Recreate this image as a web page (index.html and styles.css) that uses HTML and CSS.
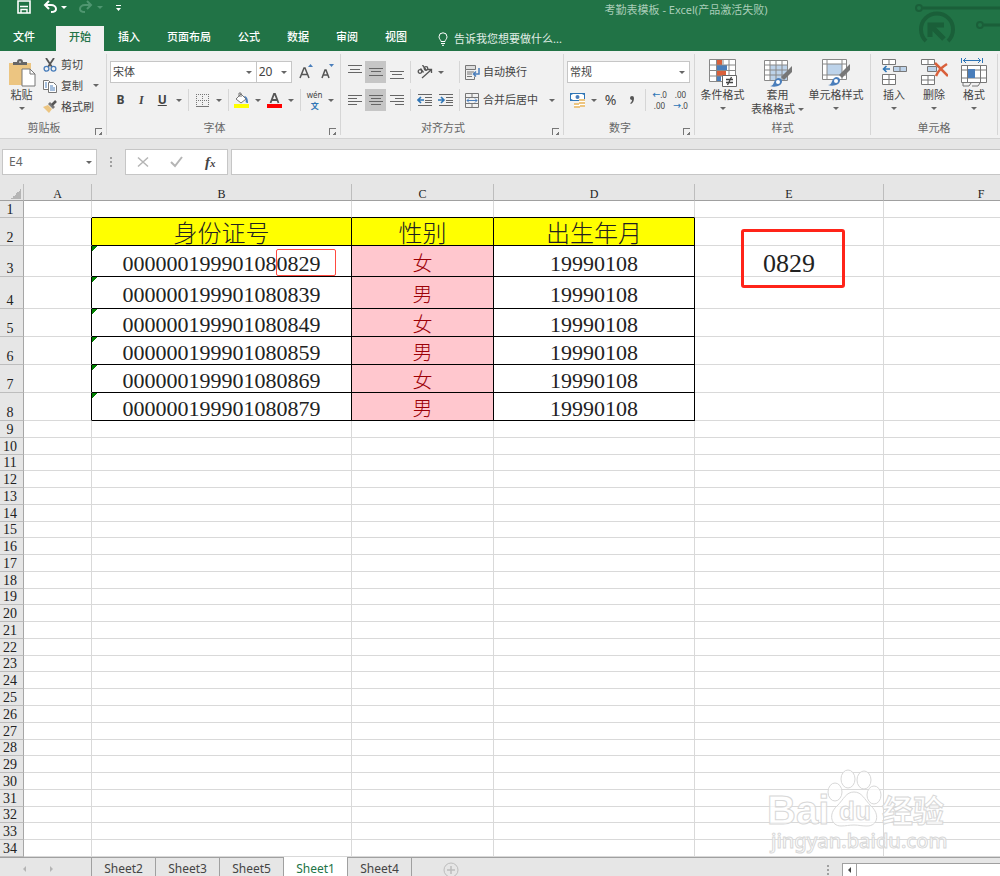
FILE: index.html
```html
<!DOCTYPE html>
<html lang="zh-CN">
<head>
  <meta charset="UTF-8">
  <title>考勤表模板 - Excel</title>
  <link rel="stylesheet" href="styles.css">
</head>
<body>

  <header class="titlebar">
    <svg class="decor" width="86" height="44" viewBox="0 0 86 44" fill="none" stroke="#1a5f39">
      <circle cx="5" cy="8" r="3" stroke-width="2"/>
      <path d="M9 8H86" stroke-width="3"/>
      <circle cx="66" cy="25" r="3" stroke-width="2"/>
      <path d="M70 25H86" stroke-width="3"/>
      <path d="M12 41A16 16 0 1 1 34 41" stroke-width="4"/>
      <path d="M16 37V25H30M17 26L30 39" stroke-width="5"/>
    </svg>

    <div class="title-row">
      <div class="quick">
        <button aria-label="保存"><svg width="14" height="14" viewBox="0 0 14 14"><path d="M1 1h12v12H1z" fill="none" stroke="#fff" stroke-width="1.6"/><path d="M3 6.500h8M4 13V9.500h6V13" fill="none" stroke="#fff" stroke-width="1.4"/></svg></button>
        <button aria-label="撤消"><svg width="14" height="14" viewBox="0 0 14 14" fill="none" stroke="#fff" stroke-width="2"><path d="M6 1L2 5l4 4M2 5h6c3 0 5 2 5 4s-2 3-5 3"/></svg><i class="caret"></i></button>
        <button aria-label="恢复" class="off"><svg width="14" height="14" viewBox="0 0 14 14" fill="none" stroke="#4f9670" stroke-width="2"><path d="M8 1l4 4-4 4M12 5H6C3 5 1 7 1 9s2 3 5 3"/></svg><i class="caret"></i></button>
        <button aria-label="自定义快速访问工具栏"><svg width="7" height="14" viewBox="0 0 7 14" fill="#fff"><path d="M1 5h5v1H1zM1 8h5L3.500 11z"/></svg></button>
      </div>
      <div class="title">考勤表模板 - Excel(产品激活失败)</div>
    </div>

    <nav class="tabs">
      <a href="#" class="file">文件</a>
      <a href="#" class="active">开始</a>
      <a href="#">插入</a>
      <a href="#">页面布局</a>
      <a href="#">公式</a>
      <a href="#">数据</a>
      <a href="#">审阅</a>
      <a href="#">视图</a>
      <button class="tell"><svg width="10" height="14" viewBox="0 0 10 14" fill="none" stroke="#fff"><path d="M3 9.500C3 8 1 7 1 4.800a4 4 0 0 1 8 0C9 7 7 8 7 9.500zM3 11.500h4M4 13.300h2"/></svg>告诉我您想要做什么...</button>
    </nav>
  </header>

  <section class="ribbon">
    <div class="group g-clip">
      <div class="body">
        <button class="big">
          <svg width="28" height="28" viewBox="0 0 28 28"><path d="M1 4h22v22H1z" fill="#ecc581"/><path d="M5 6V3h4a3 3 0 0 1 6 0h4v3z" fill="#666"/><path d="M11 3h2" stroke="#fff"/><path d="M14 10h8l5 5v12H14z" fill="#fff" stroke="#777"/><path d="M22 10v5h5" fill="none" stroke="#777"/></svg>
          <span>粘贴</span><i class="caret"></i>
        </button>
        <div class="stack">
          <button><svg width="14" height="14" viewBox="0 0 14 14" fill="none"><path d="M3 0l6 9M11 0L5 9" stroke="#555" stroke-width="1.800"/><circle cx="3.500" cy="10.800" r="2.400" stroke="#4a7ebb" stroke-width="1.300"/><circle cx="10.500" cy="10.800" r="2.400" stroke="#4a7ebb" stroke-width="1.300"/></svg>剪切</button>
          <button><svg width="14" height="14" viewBox="0 0 14 14" fill="#fff" stroke="#777"><path d="M.5 1.500h5l2 2v7h-7z"/><path d="M5.500 3.500h5l3 3v7h-8z"/><path d="M2 4h2M2 6h2M2 8h2M7 7h3M7 9h5M7 11h5" stroke="#4a7ebb"/></svg>复制<i class="caret"></i></button>
          <button><svg width="14" height="14" viewBox="0 0 14 14"><path d="M0 7l5-2 4 4-3 4z" fill="#ecc581"/><path d="M5 4l2-2 5 5-2 2z" fill="#777"/><path d="M9 5l4-4" stroke="#555" stroke-width="2.500"/></svg>格式刷</button>
        </div>
      </div>
      <footer>剪贴板<button class="launch" aria-label="剪贴板选项"></button></footer>
    </div>

    <div class="group g-font">
      <div class="body rows">
        <div class="row">
          <label class="combo font-name"><select aria-label="字体"><option>宋体</option></select></label>
          <label class="combo font-size"><select aria-label="字号"><option>20</option></select></label>
          <button class="tool grow" aria-label="增大字号"><svg width="14" height="16" viewBox="0 0 14 16"><path d="M1 14L5 4h1l4 10M2.500 10.500h6" fill="none" stroke="#555" stroke-width="1.500"/><path d="M9 3h5l-2.500-3z" fill="#4a7ebb"/></svg></button>
          <button class="tool" aria-label="减小字号"><svg width="14" height="16" viewBox="0 0 14 16"><path d="M2 14l3-8h1l3 8M3.500 11h4" fill="none" stroke="#555" stroke-width="1.500"/><path d="M9 0h5l-2.500 3z" fill="#4a7ebb"/></svg></button>
        </div>
        <div class="row">
          <button class="tool"><b>B</b></button>
          <button class="tool"><em>I</em></button>
          <button class="tool"><u>U</u></button>
          <button class="drop" aria-label="下划线类型"><i class="caret"></i></button>
          <span class="sep"></span>
          <button class="tool" aria-label="边框"><svg width="13" height="13" viewBox="0 0 13 13" stroke="#777" fill="none"><path d="M.5 0v12M6.500 0v12M12.500 0v12M0 .5h13M0 6.500h13" stroke-dasharray="1 1"/><path d="M0 12.500h13"/></svg></button>
          <button class="drop" aria-label="边框类型"><i class="caret"></i></button>
          <span class="sep"></span>
          <button class="tool" aria-label="填充颜色"><svg width="16" height="16" viewBox="0 0 16 16"><path d="M0 12h15v4H0z" fill="#ff0"/><path d="M2 7l5-5 5 5-5 4z" fill="#fff" stroke="#777"/><path d="M5 5V1h2v4" fill="none" stroke="#777"/><path d="M10 4c3 0 4 3 4 7-2 0-3-1-2-4z" fill="#4a7ebb"/></svg></button>
          <button class="drop" aria-label="填充颜色列表"><i class="caret"></i></button>
          <button class="tool" aria-label="字体颜色"><svg width="15" height="16" viewBox="0 0 15 16"><path d="M0 12h15v4H0z" fill="#f00"/><path d="M3.500 11L7 2h1l3.500 9M5 8h5" fill="none" stroke="#555" stroke-width="1.800"/></svg></button>
          <button class="drop" aria-label="字体颜色列表"><i class="caret"></i></button>
          <span class="sep"></span>
          <button class="tool wen"><span>wén</span><span class="blue">文</span></button>
          <button class="drop" aria-label="拼音选项"><i class="caret"></i></button>
        </div>
      </div>
      <footer>字体<button class="launch" aria-label="字体设置"></button></footer>
    </div>

    <div class="group g-align">
      <div class="body rows">
        <div class="row">
          <button class="tool" aria-label="顶端对齐"><svg width="14" height="14" viewBox="0 0 14 14" stroke="#666"><path d="M0 .5h14M2 4.500h10M0 7.500h14"/></svg></button>
          <button class="tool on" aria-label="垂直居中"><svg width="14" height="14" viewBox="0 0 14 14" stroke="#666"><path d="M0 3.500h14M2 6.500h10M0 10.500h14"/></svg></button>
          <button class="tool" aria-label="底端对齐"><svg width="14" height="14" viewBox="0 0 14 14" stroke="#666"><path d="M0 6.500h14M2 9.500h10M0 13.500h14"/></svg></button>
          <span class="sep"></span>
          <button class="tool" aria-label="方向"><svg width="16" height="14" viewBox="0 0 16 14" fill="none" stroke="#555"><g stroke-width="1.300"><circle cx="3" cy="6.500" r="1.800"/><path d="M3.500 3.500l3 4M5.500 0l4 5.500"/><circle cx="9" cy="3.500" r="1.800"/></g><path d="M5 13l9-8M11 4.500h3.500V8" stroke-width="1.300"/></svg></button>
          <button class="drop" aria-label="方向列表"><i class="caret"></i></button>
          <span class="sep push"></span>
          <button class="wide"><svg width="15" height="15" viewBox="0 0 15 15" fill="none" stroke="#777"><path d="M.5 4.500v-4h10v4z" fill="#ddd"/><path d="M.5 4.500v10h9v-3M2 7h7M2 9h5M2 11.500h5"/><path d="M14 3v6H9M11 6.500L8.500 9l2.500 2.500" stroke="#4a7ebb" stroke-width="1.500"/></svg>自动换行</button>
        </div>
        <div class="row">
          <button class="tool" aria-label="左对齐"><svg width="14" height="12" viewBox="0 0 14 12" stroke="#666"><path d="M0 1.500h14M0 4.500h9M0 7.500h14M0 10.500h9"/></svg></button>
          <button class="tool on" aria-label="居中"><svg width="14" height="12" viewBox="0 0 14 12" stroke="#666"><path d="M0 1.500h14M2 4.500h10M0 7.500h14M2 10.500h10"/></svg></button>
          <button class="tool" aria-label="右对齐"><svg width="14" height="12" viewBox="0 0 14 12" stroke="#666"><path d="M0 1.500h14M5 4.500h9M0 7.500h14M5 10.500h9"/></svg></button>
          <span class="sep"></span>
          <button class="tool" aria-label="减少缩进量"><svg width="16" height="12" viewBox="0 0 16 12" stroke="#666" fill="none"><path d="M1 .5h14M8 3.500h7M8 6.500h7M8 8.500h7M1 11.500h14"/><path d="M7 6H2M4 3L1 6l3 3" stroke="#2e75b6" stroke-width="1.600"/></svg></button>
          <button class="tool" aria-label="增加缩进量"><svg width="16" height="12" viewBox="0 0 16 12" stroke="#666" fill="none"><path d="M1 .5h14M8 3.500h7M8 6.500h7M8 8.500h7M1 11.500h14"/><path d="M0 6h6M3 3l3 3-3 3" stroke="#2e75b6" stroke-width="1.600"/></svg></button>
          <span class="sep push"></span>
          <button class="wide"><svg width="15" height="15" viewBox="0 0 15 15" fill="none" stroke="#777"><path d="M.5 .5h13v14H.5zM.5 4.500h13M.5 10.500h13M7 .5v4M7 10.500v4"/><path d="M2 7.500h10M4 5.500l-2 2 2 2M10 5.500l2 2-2 2" stroke="#4a7ebb"/></svg>合并后居中<i class="caret"></i></button>
        </div>
      </div>
      <footer>对齐方式<button class="launch" aria-label="对齐设置"></button></footer>
    </div>

    <div class="group g-num">
      <div class="body rows">
        <div class="row">
          <label class="combo num-format"><select aria-label="数字格式"><option>常规</option></select></label>
        </div>
        <div class="row">
          <button class="tool" aria-label="会计数字格式"><svg width="16" height="16" viewBox="0 0 16 16"><path d="M0 1h15v8H0z" fill="#2e75b6"/><path d="M3 2h9l2 1v4l-2 1H3L1 7V3z" fill="#fff"/><circle cx="7.500" cy="5" r="2" fill="#4a7ebb"/><path d="M9 7h6v8H9z" fill="#ecc581"/><path d="M4 11h6v5H4z" fill="#ecc581"/><path d="M9 9.500h6M9 12.500h6M4 13.500h6" stroke="#fff"/></svg></button>
          <button class="drop" aria-label="货币列表"><i class="caret"></i></button>
          <button class="tool pct">%</button>
          <button class="tool pct" aria-label="千位分隔样式"><svg width="6" height="9" viewBox="0 0 6 9"><path d="M1 2a2 2 0 0 1 4 0c0 3-1 5-3 6l-1-1c1 0 2-2 2-3-1 0-2-1-2-2z" fill="#555"/></svg></button>
          <span class="sep"></span>
          <button class="tool dec"><span><b class="blue">←</b>.0</span><span>.00</span></button>
          <button class="tool dec"><span>.00</span><span><b class="blue">→</b>.0</span></button>
        </div>
      </div>
      <footer>数字<button class="launch" aria-label="数字设置"></button></footer>
    </div>

    <div class="group g-style">
      <div class="body">
        <button class="big">
          <svg width="28" height="28" viewBox="0 0 28 28"><path d="M.5 .5h26v22H.5z" fill="#fff"/><path d="M8 1h5v5H8zM8 12h9v5H8z" fill="#d9603b"/><path d="M8 6h10v6H8zM8 17h4v6H8z" fill="#4a7ebb"/><path d="M.5 .5h26v22H.5zM.5 6h26M.5 11.500h26M.5 17h26M7.500 .5v22M14 .5v5M20 .5v22" fill="none" stroke="#888"/><path d="M13.500 16.500h14v11h-14z" fill="#fff" stroke="#666"/><path d="M17 20.500h7M17 23.500h7M22.500 18l-4 8" stroke="#444" stroke-width="1.300"/></svg>
          <span>条件格式</span><i class="caret"></i>
        </button>
        <button class="big">
          <svg width="28" height="28" viewBox="0 0 28 28"><path d="M.5 1.500h23v20H.5z" fill="#fff"/><path d="M6 6h17v15H6z" fill="#bdd3ea"/><path d="M.5 1.500h23v20H.5zM.5 6h23M.5 11h23M.5 16h23M6 1.500v20M12 1.500v20M18 1.500v20" fill="none" stroke="#888"/><path d="M28 7v6l-8 8-3-3z" fill="#777"/><path d="M6 27c5 0 3-7 8-8 5 0 5 5 2 7-3 2-7 2-10 1z" fill="#4a7ebb"/><circle cx="14" cy="23" r="2" fill="#fff"/></svg>
          <span>套用</span><span class="with-caret">表格格式<i class="caret"></i></span>
        </button>
        <button class="big">
          <svg width="28" height="28" viewBox="0 0 28 28"><path d="M.5 .5h24v20H.5z" fill="#fff"/><path d="M5 5h15v11H5z" fill="#bdd3ea"/><path d="M.5 .5h24v20H.5zM.5 5h24M.5 16h24M5 .5v20M20 .5v20" fill="none" stroke="#888"/><path d="M28 5v6l-8 8-3-3z" fill="#777"/><path d="M6 26c5 0 3-7 8-8 5 0 5 5 2 7-3 2-7 2-10 1z" fill="#4a7ebb"/><circle cx="14" cy="22" r="2" fill="#fff"/></svg>
          <span>单元格样式</span><i class="caret"></i>
        </button>
      </div>
      <footer>样式</footer>
    </div>

    <div class="group g-cell">
      <div class="body">
        <button class="big">
          <svg width="26" height="28" viewBox="0 0 26 28" fill="#fff" stroke="#777"><path d="M1.500 .5h13v5h-13zM8 .5v5"/><path d="M12.500 7.500h13v5h-13z" fill="#bdd3ea"/><path d="M19 7.500v5"/><path d="M1.500 15.500h13v10h-13zM8 15.500v10M1.500 20.500h13"/><path d="M9 10H3M5.500 7L2.500 10l3 3" fill="none" stroke="#2e75b6" stroke-width="1.600"/></svg>
          <span>插入</span><i class="caret"></i>
        </button>
        <button class="big">
          <svg width="28" height="28" viewBox="0 0 28 28" fill="#fff" stroke="#777"><path d="M1.500 .5h13v5h-13zM8 .5v5"/><path d="M7.500 7.500h9v5h-9z" fill="#bdd3ea"/><path d="M1.500 16.500h13v9h-13zM8 16.500v9M1.500 21h13"/><path d="M15 4c4 4 8 8 13 13M27 5c-5 3-9 7-11 12" fill="none" stroke="#d9603b" stroke-width="2.500"/></svg>
          <span>删除</span><i class="caret"></i>
        </button>
        <button class="big">
          <svg width="28" height="30" viewBox="0 0 28 30" fill="#fff" stroke="#777"><path d="M1.500 7.500h25v17h-25zM7.500 7.500v17M20.500 7.500v17M1.500 12h25M1.500 20h25"/><path d="M8 11h7v9H8z" fill="#4a7ebb" stroke="none"/><path d="M3 24v4h6l2-3M12 28h6l2-3" fill="none"/><path d="M1.500 0v5M22.500 0v5M3 2.500h18M6 0L3.500 2.500 6 5M18 0l2.500 2.500L18 5" fill="none" stroke="#2e75b6"/></svg>
          <span>格式</span><i class="caret"></i>
        </button>
      </div>
      <footer>单元格</footer>
    </div>
  </section>

  <section class="formula">
    <label class="combo name-box"><input type="text" value="E4" aria-label="名称框"></label>
    <span class="dots"></span>
    <div class="fx">
      <button aria-label="取消"><svg width="12" height="12" viewBox="0 0 12 12" stroke="#b5b5b5" stroke-width="1.500"><path d="M1 1.500l10 9M11 1.500l-10 9"/></svg></button>
      <button aria-label="输入"><svg width="13" height="12" viewBox="0 0 13 12" fill="none" stroke="#b5b5b5" stroke-width="2"><path d="M1 6l4 4 7-9"/></svg></button>
      <button class="fx-btn"><i>f<small>x</small></i></button>
    </div>
    <input type="text" class="bar" aria-label="编辑栏">
  </section>

  <main class="sheet">
    <table>
      <colgroup>
        <col class="c-num"><col class="c-a"><col class="c-b"><col class="c-c"><col class="c-d"><col class="c-e"><col>
      </colgroup>
      <thead>
        <tr><th class="corner"></th><th>A</th><th>B</th><th>C</th><th>D</th><th>E</th><th>F</th></tr>
      </thead>
      <tbody>
        <tr class="r1"><th>1</th><td></td><td class="under"></td><td class="under"></td><td class="under"></td><td></td><td></td></tr>
        <tr class="data head"><th>2</th><td></td><td>身份证号</td><td>性别</td><td>出生年月</td><td></td><td></td></tr>
        <tr class="data tall"><th>3</th><td></td><td class="id">000000199901080829<span class="mark"></span></td><td class="sex">女</td><td>19990108</td><td class="result">0829<span class="frame"></span></td><td></td></tr>
        <tr class="data taller"><th>4</th><td></td><td class="id">000000199901080839</td><td class="sex">男</td><td>19990108</td><td></td><td></td></tr>
        <tr class="data"><th>5</th><td></td><td class="id">000000199901080849</td><td class="sex">女</td><td>19990108</td><td></td><td></td></tr>
        <tr class="data"><th>6</th><td></td><td class="id">000000199901080859</td><td class="sex">男</td><td>19990108</td><td></td><td></td></tr>
        <tr class="data"><th>7</th><td></td><td class="id">000000199901080869</td><td class="sex">女</td><td>19990108</td><td></td><td></td></tr>
        <tr class="data"><th>8</th><td></td><td class="id">000000199901080879</td><td class="sex">男</td><td>19990108</td><td></td><td></td></tr>
        <tr><th>9</th><td></td><td></td><td></td><td></td><td></td><td></td></tr>
        <tr><th>10</th><td></td><td></td><td></td><td></td><td></td><td></td></tr>
        <tr><th>11</th><td></td><td></td><td></td><td></td><td></td><td></td></tr>
        <tr><th>12</th><td></td><td></td><td></td><td></td><td></td><td></td></tr>
        <tr><th>13</th><td></td><td></td><td></td><td></td><td></td><td></td></tr>
        <tr><th>14</th><td></td><td></td><td></td><td></td><td></td><td></td></tr>
        <tr><th>15</th><td></td><td></td><td></td><td></td><td></td><td></td></tr>
        <tr><th>16</th><td></td><td></td><td></td><td></td><td></td><td></td></tr>
        <tr><th>17</th><td></td><td></td><td></td><td></td><td></td><td></td></tr>
        <tr><th>18</th><td></td><td></td><td></td><td></td><td></td><td></td></tr>
        <tr><th>19</th><td></td><td></td><td></td><td></td><td></td><td></td></tr>
        <tr><th>20</th><td></td><td></td><td></td><td></td><td></td><td></td></tr>
        <tr><th>21</th><td></td><td></td><td></td><td></td><td></td><td></td></tr>
        <tr><th>22</th><td></td><td></td><td></td><td></td><td></td><td></td></tr>
        <tr><th>23</th><td></td><td></td><td></td><td></td><td></td><td></td></tr>
        <tr><th>24</th><td></td><td></td><td></td><td></td><td></td><td></td></tr>
        <tr><th>25</th><td></td><td></td><td></td><td></td><td></td><td></td></tr>
        <tr><th>26</th><td></td><td></td><td></td><td></td><td></td><td></td></tr>
        <tr><th>27</th><td></td><td></td><td></td><td></td><td></td><td></td></tr>
        <tr><th>28</th><td></td><td></td><td></td><td></td><td></td><td></td></tr>
        <tr><th>29</th><td></td><td></td><td></td><td></td><td></td><td></td></tr>
        <tr><th>30</th><td></td><td></td><td></td><td></td><td></td><td></td></tr>
        <tr><th>31</th><td></td><td></td><td></td><td></td><td></td><td></td></tr>
        <tr><th>32</th><td></td><td></td><td></td><td></td><td></td><td></td></tr>
        <tr><th>33</th><td></td><td></td><td></td><td></td><td></td><td></td></tr>
        <tr><th>34</th><td></td><td></td><td></td><td></td><td></td><td></td></tr>
      </tbody>
    </table>

    <svg class="watermark" width="184" height="90" viewBox="0 0 184 90">
      <g class="wm-shape">
        <ellipse cx="71" cy="25" rx="7" ry="9"/>
        <ellipse cx="84" cy="12" rx="7" ry="9"/>
        <ellipse cx="100" cy="13" rx="7" ry="9"/>
        <ellipse cx="110" cy="28" rx="7" ry="9"/>
        <path d="M90 25c8 0 10 7 17 14 9 8 7 20-4 20-6 0-8-1-13-1s-8 1-13 1c-10 0-13-12-4-20 7-7 9-14 17-14z"/>
      </g>
      <text class="wm-big" x="3" y="57">Bai</text>
      <text class="wm-du" x="75" y="53">du</text>
      <text class="wm-cn" x="118" y="55">经验</text>
      <text class="wm-url" x="7" y="81">jingyan.baidu.com</text>
    </svg>
  </main>

  <footer class="sheetbar">
    <div class="nav">
      <button aria-label="上一张"><svg width="5" height="8" viewBox="0 0 5 8"><path d="M4 1v6L1 4z" fill="#b5b5b5"/></svg></button>
      <button aria-label="下一张"><svg width="5" height="8" viewBox="0 0 5 8"><path d="M1 1v6l3-3z" fill="#b5b5b5"/></svg></button>
    </div>
    <button class="tab">Sheet2</button>
    <button class="tab">Sheet3</button>
    <button class="tab">Sheet5</button>
    <button class="tab current">Sheet1</button>
    <button class="tab">Sheet4</button>
    <button class="add" aria-label="新工作表"><svg width="16" height="16" viewBox="0 0 16 16" fill="none" stroke="#bdbdbd"><circle cx="8" cy="8" r="7"/><path d="M8 4v8M4 8h8" stroke-width="1.500"/></svg></button>
    <span class="dots"></span>
    <div class="scroll"><button aria-label="向左滚动"><svg width="5" height="8" viewBox="0 0 5 8"><path d="M4 1v6L1 4z" fill="#444"/></svg></button></div>
  </footer>

</body>
</html>
```
FILE: styles.css
```css
* {
  box-sizing: border-box;
}

body {
  margin: 0;
  height: 100vh;
  display: flex;
  flex-direction: column;
  overflow: hidden;
  font-family: "Noto Sans", "Noto Sans CJK SC", sans-serif;
  font-size: 11px;
  line-height: 14px;
  color: #444;
  background-color: #e6e6e6;
}

button, input, select {
  font: inherit;
  color: inherit;
  margin: 0;
  padding: 0;
  border: none;
  border-radius: 0;
  background: none;
}

button {
  display: flex;
  align-items: center;
  justify-content: center;
  white-space: nowrap;
}

svg {
  display: block;
  flex: none;
}

.caret {
  display: inline-block;
  flex: none;
  border: 3px solid transparent;
  border-top-color: #666;
  border-bottom: none;
}

.blue {
  color: #2e75b6;
}

/* title bar */
.titlebar {
  position: relative;
  flex: none;
  height: 51px;
  display: flex;
  flex-direction: column;
  justify-content: space-between;
  background-color: #217346;
  color: #fff;
}

.decor {
  position: absolute;
  top: 0;
  right: 0;
}

.title-row {
  display: flex;
  height: 20px;
}

.quick {
  display: flex;
  align-items: flex-start;
  gap: 12px;
  width: 372px;
  padding: 0 0 0 17px;
}

.quick button {
  height: 14px;
  gap: 4px;
}

.quick .caret {
  border-top-color: #fff;
}

.quick .off .caret {
  border-top-color: #4f9670;
}

.title {
  flex: 1;
  padding-top: 3px;
  text-align: center;
  color: #a9cdb8;
}

.tabs {
  display: flex;
  gap: 1px;
  height: 25px;
}

.tabs a {
  padding: 4px 13px 0;
  color: #fff;
  font-weight: 500;
  text-decoration: none;
}

.tabs .file {
  width: 55px;
}

.tabs .active {
  background-color: #f1f1f1;
  color: #217346;
}

.tell {
  gap: 6px;
  padding-left: 17px;
  color: #e0eee6;
}

/* ribbon */
.ribbon {
  flex: none;
  display: flex;
  height: 88px;
  padding: 3px 0;
  background-color: #f1f1f1;
  border-bottom: 1px solid #d2d2d2;
}

.group {
  flex: none;
  display: flex;
  flex-direction: column;
  border-right: 1px solid #d6d6d6;
}

.g-clip { width: 107px; }
.g-font { width: 234px; }
.g-align { width: 223px; }
.g-num { width: 131px; }
.g-style { width: 176px; }
.g-cell { width: 127px; }

.group .body {
  flex: 1;
  display: flex;
  padding: 0 3px;
}

.group footer {
  position: relative;
  height: 14px;
  padding-right: 18px;
  text-align: center;
  color: #666;
}

.g-style footer,
.g-cell footer {
  padding-right: 0;
}

.launch {
  position: absolute;
  right: 4px;
  bottom: 0;
  width: 7px;
  height: 7px;
  border-top: 1px solid #777;
  border-left: 1px solid #777;
  background: linear-gradient(135deg, transparent 3px, #777 3px) 2px 2px / 4px 4px no-repeat;
}

.big {
  flex: 1;
  flex-direction: column;
  justify-content: flex-start;
  padding-top: 4px;
}

.big svg {
  height: 30px;
}

.big .caret {
  margin-top: 5px;
}

.big span {
  line-height: 14px;
}

.big .with-caret {
  display: flex;
  align-items: center;
  gap: 3px;
}

.with-caret .caret {
  margin-top: 0;
}

.g-clip .big {
  flex: none;
  width: 37px;
}

.g-style .body {
  padding: 0 3px 0 0;
}

.g-style .big {
  flex: 0 0 auto;
  width: 55px;
}

.g-style .big:last-child {
  flex: 1;
}

.stack {
  display: flex;
  flex-direction: column;
  padding-left: 3px;
}

.stack button {
  height: 21px;
  gap: 4px;
  justify-content: flex-start;
}

.stack .caret {
  margin-left: 6px;
}

.group .rows {
  flex-direction: column;
  gap: 6px;
  padding-top: 7px;
}

.row {
  display: flex;
  height: 22px;
}

.combo {
  position: relative;
  display: flex;
  border: 1px solid #c6c6c6;
  background-color: #fff;
}

.combo::after {
  content: "";
  position: absolute;
  right: 4px;
  top: 50%;
  margin-top: -1px;
  border: 3px solid transparent;
  border-top-color: #666;
  border-bottom: none;
  pointer-events: none;
}

.combo select {
  appearance: none;
  width: 100%;
  padding-left: 2px;
}

.font-name {
  width: 148px;
}

.font-size {
  width: 37px;
  margin-left: -1px;
}

.font-size select {
  font-size: 12px;
}

.num-format {
  width: 123px;
}

.tool {
  width: 21px;
  font-size: 12px;
}

.tool.on {
  background-color: #c6c6c6;
}

.grow {
  margin-left: 3px;
}

.tool em {
  font-family: "Liberation Serif", serif;
  font-weight: bold;
}

.tool u {
  font-weight: bold;
}

.drop {
  width: 12px;
}

.sep {
  width: 1px;
  margin: 0 3px;
  background-color: #d6d6d6;
}

.push {
  margin-left: auto;
}

.wide {
  width: 97px;
  gap: 3px;
  padding-left: 2px;
  justify-content: flex-start;
}

.wide .caret {
  margin-left: 8px;
}

.wen, .dec {
  flex-direction: column;
  font-size: 8px;
  line-height: 11px;
}

.wen .blue {
  font-weight: bold;
}

.pct {
  font-size: 14px;
}

/* formula bar */
.formula {
  flex: none;
  display: flex;
  height: 45px;
  padding: 10px 0 9px 2px;
}

.name-box {
  width: 95px;
}

.name-box input {
  width: 80px;
  padding-left: 6px;
  font-size: 12px;
  color: #666;
}

.dots {
  width: 2px;
  height: 10px;
  margin: auto 13px;
  background: repeating-linear-gradient(#a0a0a0 0 2px, transparent 2px 4px);
}

.fx {
  display: flex;
  width: 103px;
  border: 1px solid #c6c6c6;
  background-color: #fff;
}

.fx button {
  flex: 1;
}

.fx-btn {
  font-family: "Liberation Serif", serif;
  font-size: 15px;
  font-weight: bold;
}

.fx-btn small {
  font-size: 11px;
}

.bar {
  flex: 1;
  margin-left: 3px;
  border: 1px solid #c6c6c6;
  border-right: none;
  background-color: #fff;
}

/* grid */
.sheet {
  position: relative;
  flex: 1;
  min-height: 0;
  overflow: hidden;
  background-color: #fff;
}

.sheet table {
  width: max(100%, 1079px);
  height: 100%;
  table-layout: fixed;
  border-spacing: 0;
}

.c-num { width: 24px; }
.c-a { width: 68px; }
.c-b { width: 260px; }
.c-c { width: 142px; }
.c-d { width: 201px; }
.c-e { width: 189px; }

.sheet th {
  padding: 0;
  background-color: #e6e6e6;
  border-right: 1px solid #a6a6a6;
  border-bottom: 1px solid #bdbdbd;
  font-family: "Liberation Serif", serif;
  font-size: 14px;
  font-weight: normal;
  line-height: 14px;
  vertical-align: bottom;
  color: #222;
}

.sheet thead th {
  height: 17px;
  border-right-color: #bdbdbd;
  border-bottom-color: #a0a0a0;
  font-size: 12px;
  line-height: 12px;
}

.sheet tbody th {
  padding-right: 3px;
}

.sheet .corner {
  background: linear-gradient(135deg, transparent 50%, #b5b5b5 50%) 11px 5px / 10px 10px no-repeat #e6e6e6;
}

.sheet td {
  padding: 0;
  border-right: 1px solid #d9d9d9;
  border-bottom: 1px solid #d9d9d9;
}

.r1 {
  height: 17px;
}

.sheet .under {
  border-bottom-color: #000;
}

.data {
  height: 28px;
}

.tall {
  height: 31px;
}

.taller {
  height: 32px;
}

.data td {
  padding-top: 5px;
  font-family: "Liberation Serif", "Noto Sans CJK SC", serif;
  font-size: 22px;
  font-weight: 300;
  line-height: 22px;
  text-align: center;
  color: #222;
}

.data td:nth-child(2) {
  border-right-color: #000;
}

.data td:nth-child(3),
.data td:nth-child(4),
.data td:nth-child(5) {
  border-right-color: #000;
  border-bottom-color: #000;
}

.head td:nth-child(n+3):nth-child(-n+5) {
  background-color: #ff0;
  font-size: 24px;
}

.data .id {
  position: relative;
  background: linear-gradient(135deg, #008000 4px, transparent 4px) 0 0 / 6px 6px no-repeat;
}

.data .sex {
  background-color: #ffc7ce;
  color: #9c0006;
  font-size: 20px;
}

.data .result {
  position: relative;
  font-size: 26px;
}

.mark {
  position: absolute;
  top: 3px;
  right: 15px;
  width: 60px;
  height: 27px;
  border: 1px solid #ff4a40;
  border-radius: 2px;
}

.frame {
  position: absolute;
  top: -17px;
  left: 46px;
  width: 104px;
  height: 59px;
  border: 3px solid #ff2419;
  border-radius: 3px;
}

.watermark {
  position: absolute;
  right: 52px;
  bottom: 0;
  fill: #fff;
  fill-opacity: 0.7;
  stroke: #d8d8d8;
  font-family: "Liberation Sans", "Noto Sans CJK SC", sans-serif;
  font-weight: bold;
}

.wm-big {
  font-size: 40px;
}

.wm-du {
  font-size: 26px;
}

.wm-cn {
  font-size: 31px;
}

.wm-url {
  font-family: "Noto Sans", sans-serif;
  font-size: 20px;
  font-weight: 500;
}

/* sheet tabs */
.sheetbar {
  flex: none;
  display: flex;
  height: 19px;
  border-top: 1px solid #a0a0a0;
  background-color: #e6e6e6;
}

.nav {
  display: flex;
  justify-content: center;
  gap: 22px;
  width: 92px;
  padding: 4px 16px 0 0;
  border-right: 1px solid #a0a0a0;
}

.tab {
  width: 64px;
  padding-top: 4px;
  border-right: 1px solid #a0a0a0;
  font-size: 12px;
}

.current {
  margin-top: -1px;
  background-color: #fff;
  color: #217346;
}

.add {
  margin-left: 31px;
  padding-top: 6px;
}

.sheetbar .dots {
  margin: 7px 13px 0 auto;
}

.scroll {
  width: 158px;
  margin-top: 5px;
  border: 1px solid #a0a0a0;
  border-right: none;
  border-bottom: none;
  background-color: #fff;
}

.scroll button {
  width: 14px;
  height: 100%;
  border-right: 1px solid #a0a0a0;
}
```
